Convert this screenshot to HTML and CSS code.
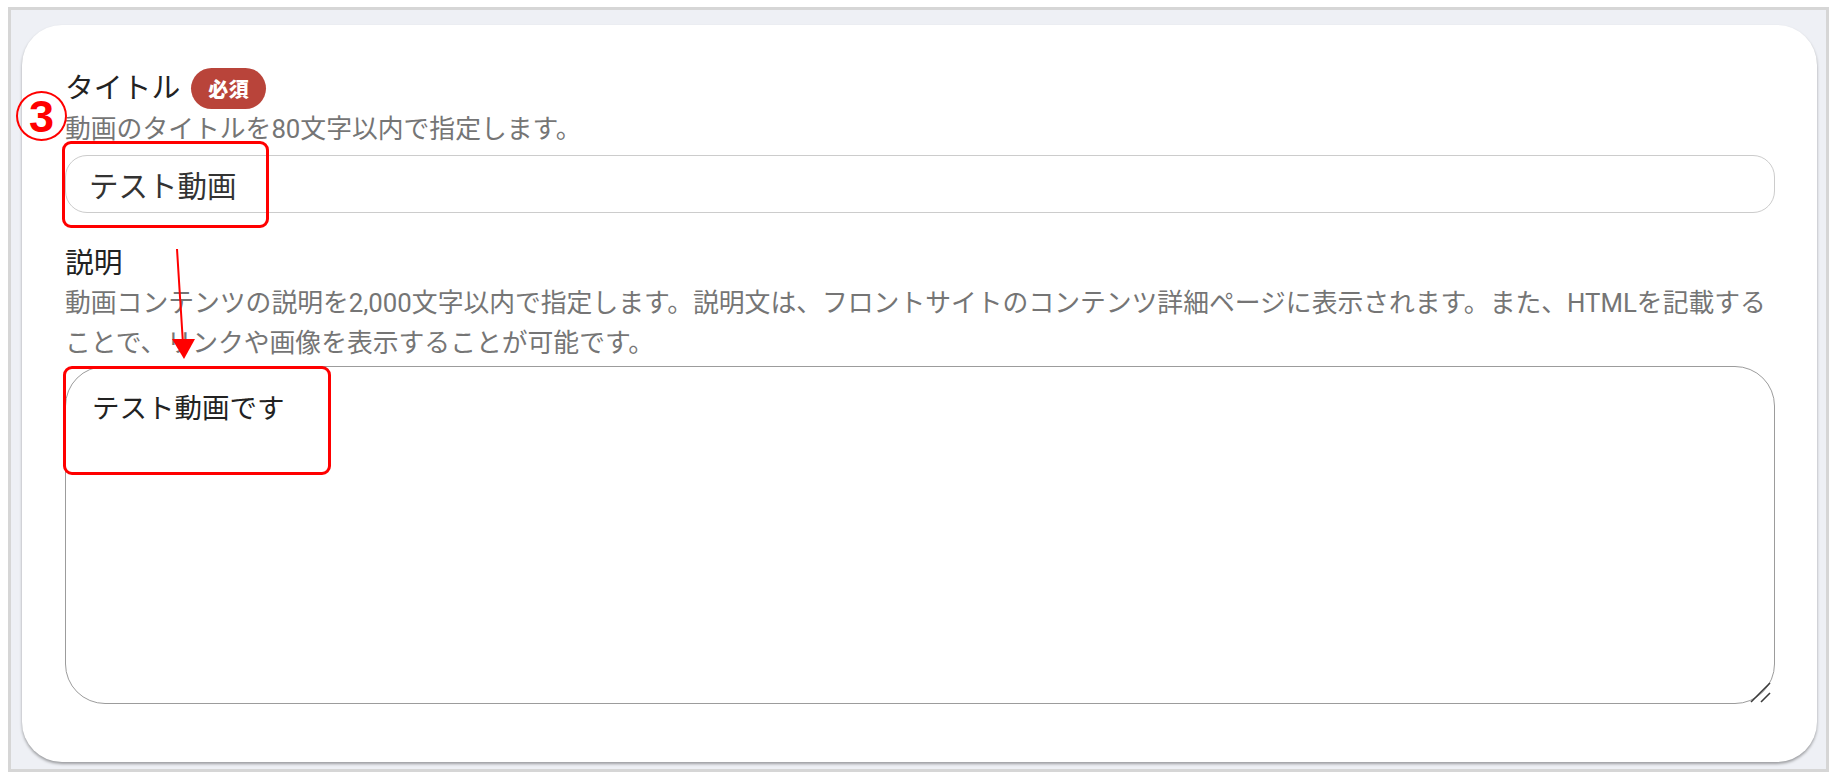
FILE: index.html
```html
<!DOCTYPE html>
<html lang="ja">
<head>
<meta charset="utf-8">
<title>動画設定</title>
<link rel="stylesheet" href="styles.css">
</head>
<body>
<div class="frame">
  <section class="card">
    <div class="field">
      <div class="field-head">
        <span class="label">タイトル</span>
        <span class="badge">必須</span>
      </div>
      <p class="desc">動画のタイトルを80文字以内で指定します。</p>
      <input class="text-input" type="text" value="テスト動画">
    </div>
    <div class="field field-desc">
      <div class="field-head plain">
        <span class="label">説明</span>
      </div>
      <p class="desc">動画コンテンツの説明を2,000文字以内で指定します。説明文は、フロントサイトのコンテンツ詳細ページに表示されます。また、HTMLを記載することで、リンクや画像を表示することが可能です。</p>
      <div class="area-wrap">
        <textarea class="text-area">テスト動画です</textarea>
        <svg class="resizer" width="22" height="22" viewBox="0 0 22 22">
          <line x1="1" y1="21" x2="20" y2="2" stroke="#3c3c3c" stroke-width="1.6"/>
          <line x1="11" y1="21" x2="20" y2="12" stroke="#3c3c3c" stroke-width="1.6"/>
        </svg>
      </div>
    </div>
  </section>
</div>

<div class="note-box note-box-1"></div>
<div class="note-box note-box-2"></div>
<div class="note-num">3</div>
<svg class="note-arrow" width="40" height="120" viewBox="0 0 40 120">
  <line x1="7" y1="0" x2="13" y2="95" stroke="#ff0000" stroke-width="2"/>
  <polygon points="2,90 25,90 14,110" fill="#ff0000"/>
</svg>
</body>
</html>
```

FILE: styles.css
```css
html, body {
  margin: 0;
  padding: 0;
  background: #ffffff;
}

body {
  position: relative;
  width: 1841px;
  height: 782px;
  font-family: Roboto, "Noto Sans CJK JP", sans-serif;
  overflow: hidden;
}

.frame {
  margin: 7px 0 0 8px;
  width: 1821px;
  height: 765px;
  box-sizing: border-box;
  border: 3px solid #d6d6d6;
  background: #eef0f5;
  padding: 15px 9px 7px 11px;
}

.card {
  background: #ffffff;
  border-radius: 40px;
  box-shadow: 0 2px 3px rgba(0, 0, 0, 0.35);
  padding: 43px 42px 58px 43px;
  height: 737px;
  box-sizing: border-box;
}

.field-head {
  display: flex;
  align-items: center;
  gap: 11px;
  height: 41px;
}

.field-head.plain {
  height: 40px;
}

.label {
  font-size: 28.8px;
  line-height: 41px;
  color: #222222;
}

.badge {
  display: inline-flex;
  align-items: center;
  justify-content: center;
  width: 75px;
  height: 41px;
  border-radius: 21px;
  background: #b9443a;
  color: #ffffff;
  font-family: "Noto Sans CJK JP", sans-serif;
  font-weight: 900;
  font-size: 20px;
  letter-spacing: 0.5px;
}

.desc {
  margin: 0;
  font-size: 25.8px;
  line-height: 40px;
  color: #757575;
}

.text-input {
  display: block;
  margin-top: 6px;
  width: 100%;
  height: 58px;
  box-sizing: border-box;
  border: 1.5px solid #cccccc;
  border-radius: 22px;
  padding: 0 23px;
  font-family: Roboto, "Noto Sans CJK JP", sans-serif;
  font-size: 29.5px;
  color: #333333;
  background: #ffffff;
  outline: none;
}

.field-desc {
  margin-top: 30px;
}

.area-wrap {
  position: relative;
  margin-top: 3px;
}

.text-area {
  display: block;
  width: 100%;
  height: 338px;
  box-sizing: border-box;
  border: 1.5px solid #9c9c9c;
  border-radius: 40px;
  padding: 22px 26px;
  font-family: Roboto, "Noto Sans CJK JP", sans-serif;
  font-size: 27.5px;
  line-height: 40px;
  color: #222222;
  background: #ffffff;
  outline: none;
  resize: none;
}

.resizer {
  position: absolute;
  right: 3px;
  bottom: 1px;
}

/* annotations overlaid on the screenshot */
.note-box {
  position: absolute;
  border: 3px solid #ff0000;
  border-radius: 9px;
  box-sizing: border-box;
}

.note-box-1 {
  left: 62px;
  top: 141px;
  width: 207px;
  height: 87px;
}

.note-box-2 {
  left: 63px;
  top: 366px;
  width: 268px;
  height: 109px;
}

.note-num {
  position: absolute;
  left: 16px;
  top: 91px;
  width: 51px;
  height: 50px;
  box-sizing: border-box;
  border: 2px solid #ff0000;
  border-radius: 50%;
  color: #ff0000;
  font-family: "Liberation Sans", Arial, sans-serif;
  font-weight: 700;
  font-size: 45px;
  line-height: 47px;
  text-align: center;
  background: transparent;
}

.note-arrow {
  position: absolute;
  left: 170px;
  top: 249px;
}
```
